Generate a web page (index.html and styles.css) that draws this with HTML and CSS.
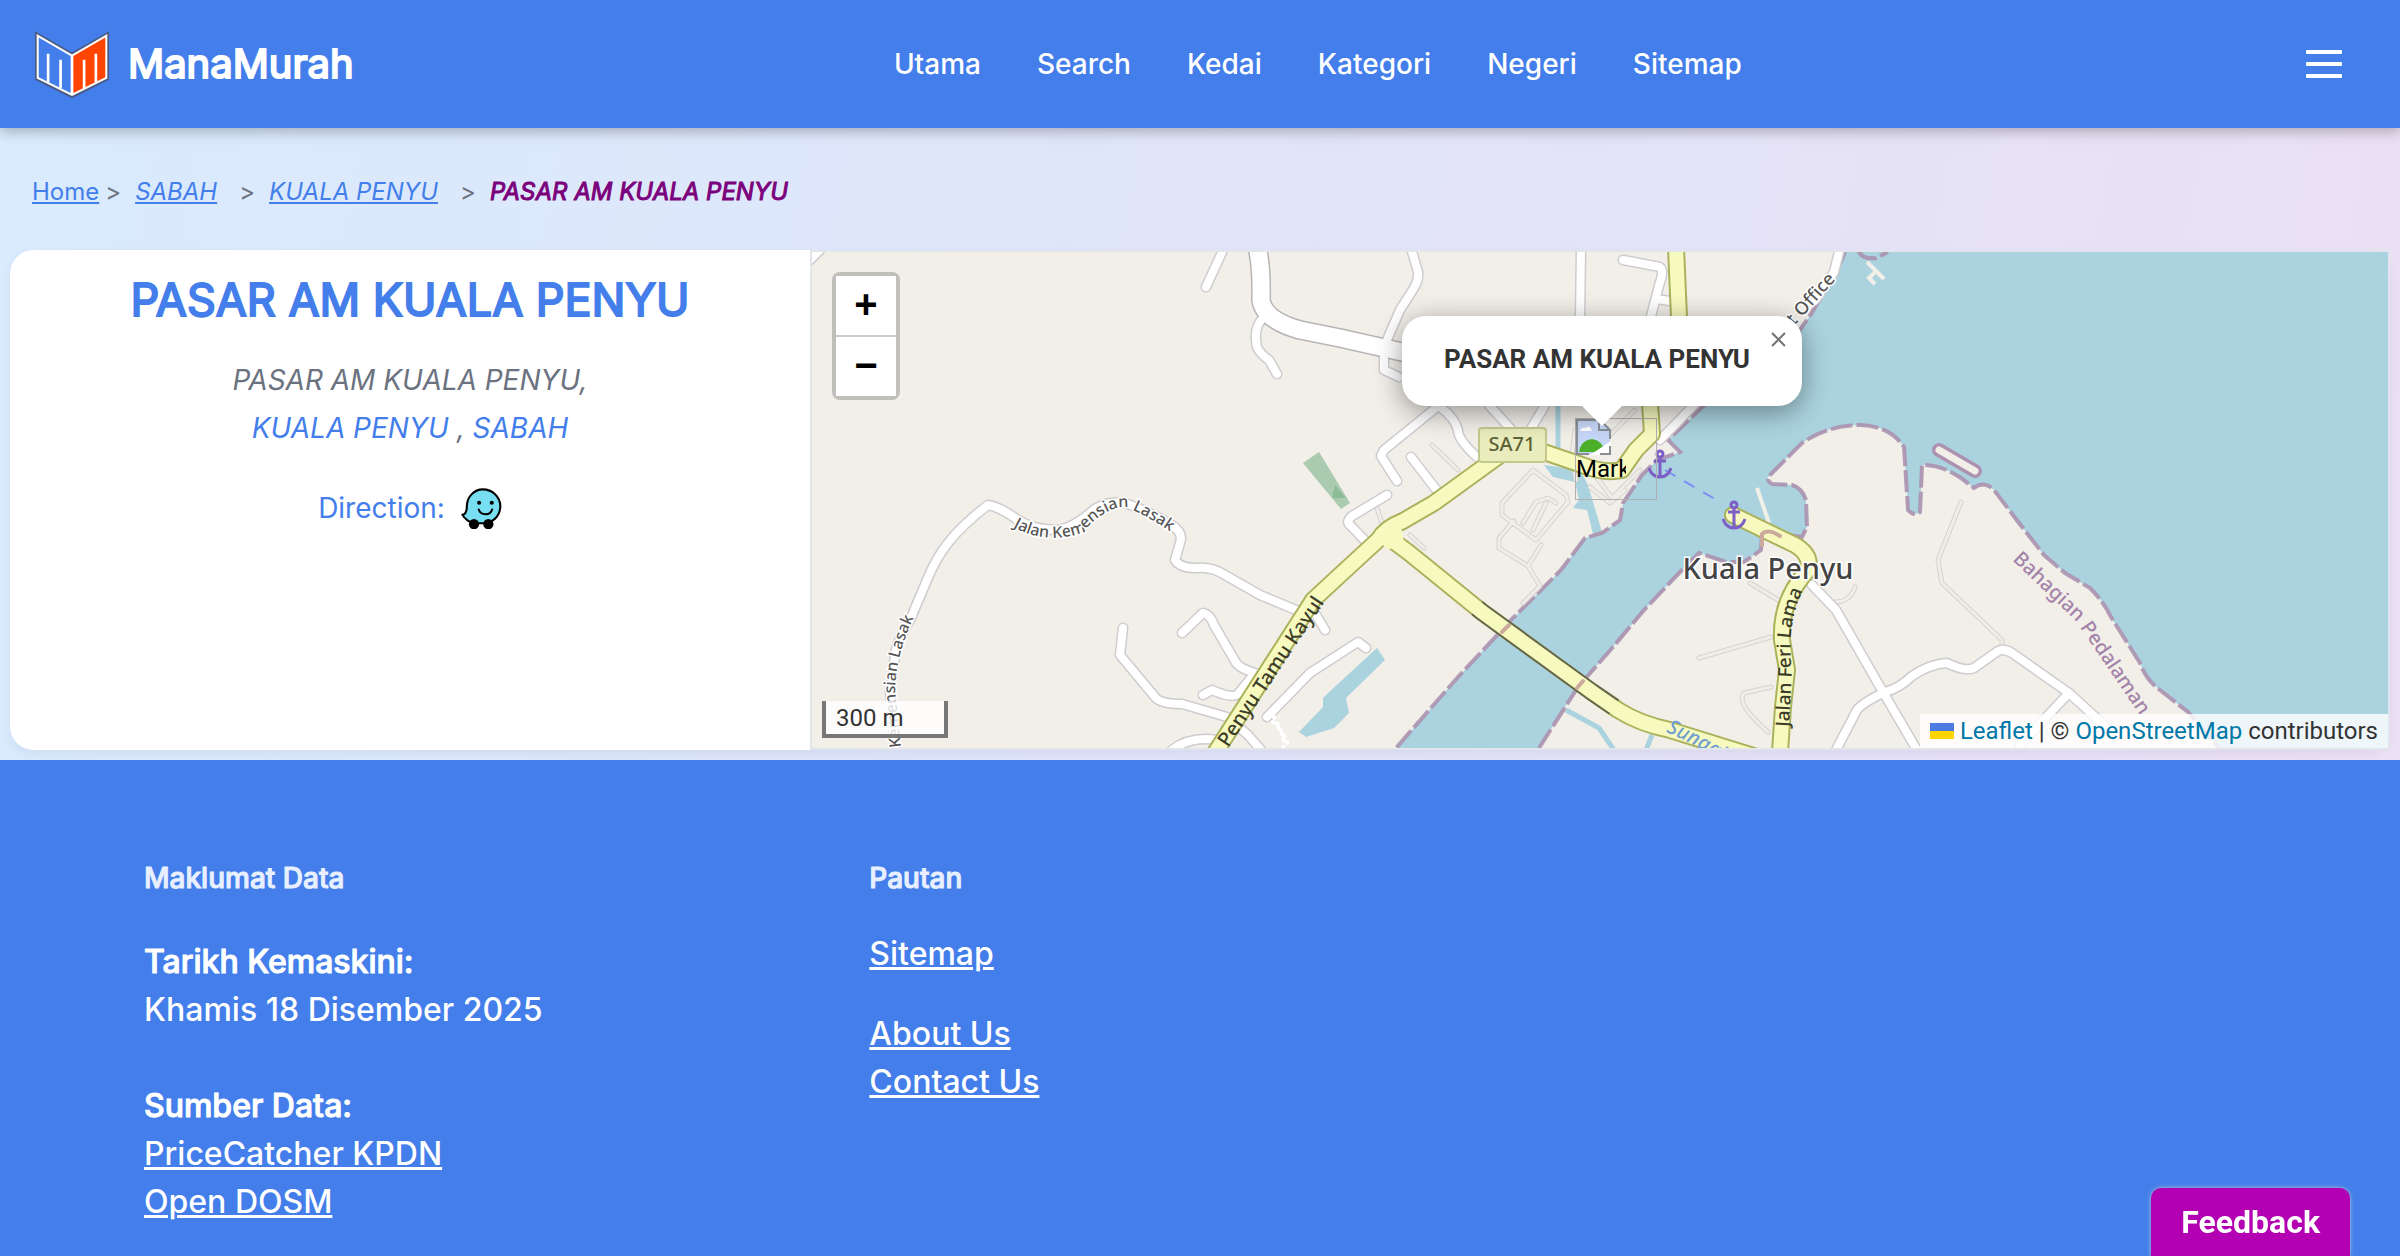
FILE: index.html
```html
<!DOCTYPE html>
<html lang="ms">
<head>
<meta charset="utf-8">
<meta name="viewport" content="width=device-width, initial-scale=1">
<title>PASAR AM KUALA PENYU - ManaMurah</title>
<link rel="stylesheet" href="styles.css">
</head>
<body>
<header class="site-header">
  <a class="brand" href="#">
    <svg class="brand-logo" viewBox="0 0 226 204" aria-hidden="true">
      <path d="M3 3 113 66 223 3V147L113 202 3 147Z" fill="#4a5a80"/>
      <path d="M8 11 113 72 218 11V144L113 196 8 144Z" fill="#fff"/>
      <path d="M14 22 109 77V187L14 140Z" fill="#437eeb"/>
      <path d="M117 77 212 22V140L117 187Z" fill="#ff4500"/>
      <path d="M42 154V70M79 172V88M149 172V88M184 154V70" stroke="#fff" stroke-width="8" fill="none"/>
    </svg>
    <span class="brand-name">ManaMurah</span>
  </a>
  <nav class="main-nav" aria-label="Utama">
    <a href="#">Utama</a>
    <a href="#">Search</a>
    <a href="#">Kedai</a>
    <a href="#">Kategori</a>
    <a href="#">Negeri</a>
    <a href="#">Sitemap</a>
  </nav>
  <button class="menu-button" type="button" aria-label="Menu"><span></span><span></span><span></span></button>
</header>

<main>
  <nav class="breadcrumb" aria-label="Breadcrumb">
    <a href="#">Home</a><span class="sep sep-first">&gt;</span>
    <a class="place" href="#">SABAH</a><span class="sep">&gt;</span>
    <a class="place" href="#">KUALA PENYU</a><span class="sep">&gt;</span>
    <span class="current">PASAR AM KUALA PENYU</span>
  </nav>

  <section class="store">
    <div class="store-info">
      <h1>PASAR AM KUALA PENYU</h1>
      <address>PASAR AM KUALA PENYU,<br><a href="#">KUALA PENYU</a> , <a href="#">SABAH</a></address>
      <a class="direction" href="#">Direction:
        <svg class="waze" viewBox="0 0 120 120" aria-hidden="true">
          <path d="M64 4C91 4 115 25 115 53C115 84 91 103 64 103H42C28 103 10 91 4 78C14 77 17 70 17 55C17 26 38 4 64 4Z" fill="#78dff2" stroke="#000" stroke-width="6" stroke-linejoin="round"/>
          <circle cx="38" cy="106" r="15"/><circle cx="80" cy="106" r="15"/>
          <circle cx="53" cy="43" r="6"/><circle cx="90" cy="43" r="6"/>
          <path d="M52 63C57 81 86 82 91 63" fill="none" stroke="#000" stroke-width="6" stroke-linecap="round"/>
        </svg>
      </a>
    </div>

    <div class="map">
      <svg class="map-canvas" viewBox="812 252 1576 496" preserveAspectRatio="xMidYMid slice" role="img" aria-label="Peta Kuala Penyu">
        <defs>
          <path id="coast-north" d="M1845 252 1836 273 1809 317 1795 337 1702 407 1668 440 1680 452 1657 460 1642 475 1623 503 1620 520 1602 533 1585 538 1561 570 1513 618 1458 677 1396 748"/>
          <path id="coast-south" d="M1539 748 1578 687 1613 647 1644 610 1682 570 1699 553 1726 562H1744L1761 550 1762 533 1770 532 1802 537 1807 527 1806 500Q1802 488 1792 485L1772 484Q1765 480 1770 475L1778 467 1802 443Q1828 425 1861 425 1890 426 1904 447L1908 510Q1914 517 1920 512L1922 465Q1940 464 1961 478L1974 488Q1984 480 1994 490L2019 523 2044 555 2065 573 2090 588Q2104 602 2111 617L2140 663Q2146 680 2160 690L2188 712 2219 748"/>
          <g id="lanes">
            <path d="M810 260 820 250M1224 248 1206 287M1263 318Q1253 328 1257 347 1260 354 1269 360L1277 374"/>
            <path d="M895 752 890 690 896 650Q900 635 910 620L927 580Q936 558 948 543 962 525 988 505 1000 507 1018 520 1034 530 1058 530 1072 528 1090 513 1103 500 1125 503 1150 512 1170 524 1184 532 1180 543L1175 560Q1180 568 1195 568 1212 566 1225 575L1260 595 1296 610 1316 615 1325 630"/>
            <path d="M1123 628 1120 655 1155 697Q1160 704 1182 704L1227 717 1248 735 1261 750M1182 633 1203 613Q1210 614 1214 625L1235 661Q1238 668 1255 673L1238 694Q1232 699 1212 690L1203 695M1172 750Q1190 736 1217 740M1267 717 1310 673 1358 642 1366 648"/>
            <path d="M1411 248 1418 272Q1419 280 1414 288L1400 310 1384 347 1384 370 1399 377M1581 248 1580 320M1623 260 1655 266Q1666 266 1660 282L1650 320M1656 299 1670 301M1840 248 1834 272 1815 300"/>
            <path d="M1437 407 1384 450 1381 456 1397 481M1440 407Q1455 418 1458 430 1458 440 1477 457M1411 457 1442 497M1489 405 1518 437M1544 407 1526 437M1387 495 1352 516Q1345 522 1351 526L1372 548M1696 403 1660 440"/>
            <path d="M1812 585 1836 610 1883 692 1917 750M1836 750 1857 710Q1862 703 1885 692 1900 688 1912 676 1930 664 1947 663 1965 672 1974 668L1998 651Q2004 648 2012 653L2069 693 2115 735M2069 693 2020 745"/>
          </g>
          <g id="paths">
            <path d="M1533 470 1502 503V515L1536 540 1568 502 1566 495ZM1514 521 1499 538V548L1528 566 1541 545M1528 566 1540 586 1523 603M1523 523 1536 502 1548 498 1556 503M1533 530 1546 503M1575 430 1572 455 1576 480M1595 475 1612 498 1640 470M1590 487 1610 503 1625 490M1605 440 1635 410M1432 445 1458 470M1376 505 1384 530M1410 535 1424 548"/>
            <path d="M1961 502 1938 560 1942 583 2002 640V650M1699 658 1771 637M1771 687 1744 693Q1735 703 1768 732M1750 583 1778 600M1855 587Q1850 602 1835 602"/>
          </g>
          <path id="main-kayul" d="M1215 753 1313 600 1340 575 1378 540Q1385 528 1403 521L1434 503 1492 461 1512 447 1544 452 1582 465Q1604 474 1622 470L1636 450 1652 434 1650 403Q1676 370 1679 317L1676 248"/>
          <path id="main-bridge" d="M1389 538 1408 552 1482 612 1592 692 1618 710Q1640 724 1670 730L1760 758"/>
          <path id="main-feri" d="M1733 515 1795 545Q1812 555 1808 570 1780 600 1782 640L1787 670 1783 707 1780 752"/>
          <path id="t-kemensian" d="M1013 527Q1045 545 1082 533 1105 507 1125 507 1150 516 1182 540"/>
          <path id="t-kemensian2" d="M901 747 895 690Q896 650 920 605"/>
          <path id="t-kayul" d="M1228 748 1330 594"/>
          <path id="t-feri" d="M1789 727 1792 670Q1785 620 1809 578"/>
          <path id="t-bahagian" d="M2012 560 2075 620 2150 730"/>
          <path id="t-sungai" d="M1666 732Q1690 742 1730 765"/>
          <g id="anchor" fill="none" stroke="#7d5fc6" stroke-width="3">
            <circle cy="-10" r="3"/><path d="M0-7V13M-6-3H6M-11 4Q-8 13 0 13 8 13 11 4"/>
          </g>
        </defs>

        <path fill="#f2efe9" d="M0 0H3200V1000H0Z"/>
        <path fill="#aad3df" d="M1845 252 1836 273 1809 317 1795 337 1702 407 1668 440 1680 452 1657 460 1642 475 1623 503 1620 520 1602 533 1585 538 1561 570 1513 618 1458 677 1396 748H1539L1578 687 1613 647 1644 610 1682 570 1699 553 1726 562H1744L1761 550 1762 533 1770 532 1802 537 1807 527 1806 500Q1802 488 1792 485L1772 484Q1765 480 1770 475L1778 467 1802 443Q1828 425 1861 425 1890 426 1904 447L1908 510Q1914 517 1920 512L1922 465Q1940 464 1961 478L1974 488Q1984 480 1994 490L2019 523 2044 555 2065 573 2090 588Q2104 602 2111 617L2140 663Q2146 680 2160 690L2188 712 2219 748H2400V252Z"/>
        <path fill="#aad3df" d="M1377 648 1385 660 1346 698 1349 713 1334 728 1306 737 1299 732 1323 707V698L1340 682ZM1544 465 1580 470 1588 485 1602 532 1593 534 1587 510 1573 508 1579 500 1575 482 1553 477Z"/>
        <path fill="none" stroke="#aad3df" stroke-width="5" d="M1558 400V462M1566 710 1599 728 1614 750M1652 735 1646 750"/>
        <path fill="#aacbaf" d="M1303 463 1319 452 1350 503 1341 509Z"/>
        <path fill="#8cbc98" d="M1335 485 1346 498H1332Z"/>

        <g fill="none" stroke="#ac92b0" stroke-width="4" stroke-dasharray="22 4" opacity=".9">
          <use href="#coast-north"/><use href="#coast-south"/>
          <path d="M1858 250Q1862 260 1876 258L1888 252"/>
        </g>
        <path fill="none" stroke="#f2efe9" stroke-width="4" d="M1867 262 1884 279M1876 271 1869 278 1875 284M1757 488 1769 523"/>
        <path fill="none" stroke="#ac92b0" stroke-width="14" stroke-linecap="round" d="M1939 450 1975 471"/>
        <path fill="none" stroke="#f2efe9" stroke-width="7" stroke-linecap="round" d="M1939 450 1975 471"/>

        <g fill="none" stroke-linecap="round" stroke-linejoin="round">
          <use href="#paths" stroke="#d6d2cf" stroke-width="5"/>
          <use href="#paths" stroke="#f0ede9" stroke-width="3"/>
          <use href="#lanes" stroke="#cfccd0" stroke-width="11"/>
          <path stroke="#b9b5b5" stroke-width="20" d="M1255 240Q1262 260 1261 300 1264 320 1300 330L1340 338 1402 352"/>
          <use href="#lanes" stroke="#fff" stroke-width="8"/>
          <path stroke="#fff" stroke-width="17" d="M1255 240Q1262 260 1261 300 1264 320 1300 330L1340 338 1402 352"/>
          <path stroke="#fff" stroke-width="4" stroke-dasharray="1 6" d="M1267 718Q1287 730 1283 750M1274 717 1290 748"/>
          <g stroke="#abb25c" stroke-width="18">
            <use href="#main-kayul"/><use href="#main-bridge"/><use href="#main-feri"/>
          </g>
          <path stroke="#66684a" stroke-width="18" stroke-linecap="butt" d="M1477 608 1482 612 1592 692 1614 707"/>
          <g stroke="#f7fabf" stroke-width="14">
            <use href="#main-kayul"/><use href="#main-bridge"/><use href="#main-feri"/>
          </g>
          <path stroke="none" fill="#f7fabf" d="M1374 536 1400 522 1404 542 1388 550Z"/>
          <path stroke="#cba99b" stroke-width="4" d="M1502 632 1509 625M1577 688 1583 681M1762 545V534Q1768 528 1780 536"/>
        </g>

        <path fill="none" stroke="#7f8ff0" stroke-width="2" stroke-dasharray="12 10" d="M1665 470 1720 502"/>
        <use href="#anchor" x="1660" y="464"/>
        <use href="#anchor" x="1734" y="515"/>

        <rect x="1479" y="428" width="67" height="34" rx="3" fill="#e9ecbc" stroke="#c3c98c" stroke-width="2"/>
        <g class="map-label">
          <text x="1512" y="451" font-size="20" fill="#5d6237" text-anchor="middle">SA71</text>
          <text x="1768" y="579" font-size="29" fill="#444" text-anchor="middle" class="halo">Kuala Penyu</text>
          <g font-size="16" fill="#555" class="halo">
            <text><textPath href="#t-kemensian">Jalan Kemensian Lasak</textPath></text>
            <text><textPath href="#t-kemensian2">Kemensian Lasak</textPath></text>
          </g>
          <text font-size="20" fill="#3c3c28"><textPath href="#t-kayul">Penyu Tamu Kayul</textPath></text>
          <text font-size="19" fill="#3c3c28"><textPath href="#t-feri">Jalan Feri Lama</textPath></text>
          <text font-size="20" fill="#a483aa"><textPath href="#t-bahagian">Bahagian Pedalaman</textPath></text>
          <text font-size="20" fill="#6f9fd0" font-style="italic"><textPath href="#t-sungai">Sungai</textPath></text>
          <text font-size="18" fill="#555" class="halo" transform="translate(1794 326) rotate(-48)">t Office</text>
        </g>
      </svg>

      <div class="zoom-control">
        <button type="button" aria-label="Zoom in">+</button>
        <button type="button" aria-label="Zoom out">&minus;</button>
      </div>
      <div class="scale">300 m</div>

      <div class="marker">
        <svg class="marker-image" viewBox="0 0 36 36" aria-hidden="true">
          <path d="M1 1H24L34 11V35H1Z" fill="#c5d6f6"/>
          <path d="M4 12Q6 7 10 9 13 5 16 12Z" fill="#fff"/>
          <path d="M3 33Q5 21 16 20 26 21 29 33Z" fill="#4caf2a"/>
          <path d="M14 36 35 22V36Z" fill="#fff"/>
          <path d="M1 36V1H24L34 11V20M23 1V11H34M1 35H13M34 27V35H24" fill="none" stroke="#8a8f96" stroke-width="2"/>
        </svg>
        <span class="marker-alt">Marker</span>
      </div>
      <div class="popup" role="dialog" aria-label="PASAR AM KUALA PENYU">
        <strong>PASAR AM KUALA PENYU</strong>
        <button class="popup-close" type="button" aria-label="Close">
          <svg viewBox="0 0 14 14" aria-hidden="true"><path d="M1 1 13 13M13 1 1 13" stroke="#757575" stroke-width="2"/></svg>
        </button>
      </div>

      <div class="attribution">
        <svg viewBox="0 0 24 16" aria-hidden="true"><path fill="#4c7be1" d="M0 0h24v8H0z"/><path fill="#ffd500" d="M0 8h24v8H0z"/></svg>
        <span><a href="#">Leaflet</a> | © <a href="#">OpenStreetMap</a> contributors</span>
      </div>
    </div>
  </section>
</main>

<footer class="site-footer">
  <section>
    <h2>Maklumat Data</h2>
    <div class="facts">
      <p><strong>Tarikh Kemaskini:</strong><br>Khamis 18 Disember 2025</p>
      <p><strong>Sumber Data:</strong><br><a href="#">PriceCatcher KPDN</a><br><a href="#">Open DOSM</a></p>
    </div>
  </section>
  <section>
    <h2>Pautan</h2>
    <div class="links">
      <p><a href="#">Sitemap</a></p>
      <p><a href="#">About Us</a><br><a href="#">Contact Us</a></p>
    </div>
  </section>
</footer>

<button class="feedback" type="button">Feedback</button>
</body>
</html>
```
FILE: styles.css
```css
:root {
  --blue: #437eeb;
  --line: #e2e6ec;
}

* {
  box-sizing: border-box;
}

body {
  margin: 0;
  font-family: Inter, "Liberation Sans", sans-serif;
  font-size: 32px;
  line-height: 48px;
  background: var(--blue);
}

h1,
h2,
p {
  margin: 0;
}

button {
  border: 0;
  padding: 0;
  font: inherit;
  cursor: pointer;
}

h1,
h2,
strong,
.brand-name,
.current {
  font-weight: 450;
  -webkit-text-stroke: 1px currentColor;
}

h1,
.brand-name {
  font-weight: 400;
  -webkit-text-stroke-width: 2px;
}

/* Header */
.site-header {
  position: relative;
  display: flex;
  align-items: center;
  justify-content: space-between;
  height: 128px;
  padding: 0 34px;
  background: var(--blue);
  box-shadow: 0 4px 12px rgba(0, 0, 0, .25);
}

.brand {
  display: flex;
  align-items: center;
  gap: 18px;
  color: #fff;
  text-decoration: none;
}

.brand-logo {
  width: 76px;
  height: 69px;
}

.brand-name {
  font-size: 40px;
}

.main-nav {
  display: flex;
  flex-wrap: wrap;
  gap: 0 56px;
}

.main-nav a {
  color: #fff;
  font-size: 28px;
  font-weight: 500;
  text-decoration: none;
}

.menu-button {
  display: flex;
  flex-direction: column;
  gap: 8px;
  padding: 24px;
  background: none;
}

.menu-button span {
  width: 36px;
  height: 4px;
  border-radius: 1px;
  background: #fff;
}

/* Page body */
main {
  padding: 40px 10px 10px;
  background: linear-gradient(100deg, #d9ebfd, #dfe6fa 40%, #ebe0f4);
}

.breadcrumb {
  display: flex;
  flex-wrap: wrap;
  padding: 0 22px;
  margin-bottom: 34px;
  font-size: 24px;
}

.breadcrumb a {
  color: #437eeb;
}

.place,
.current {
  font-style: italic;
}

.sep {
  padding: 0 14px 0 22px;
  color: #6b7280;
}

.sep-first {
  padding-left: 6px;
}

.current {
  color: #7b007b;
}

/* Store card */
.store {
  display: grid;
  grid-template-columns: 40fr 79fr;
  border-radius: 24px;
  box-shadow: 0 4px 8px rgba(80, 80, 140, .08);
}

.store-info {
  display: flex;
  flex-direction: column;
  align-items: center;
  gap: 32px;
  min-height: 500px;
  padding: 26px 24px;
  border-radius: 24px 0 0 24px;
  background: #fff;
  font-size: 28px;
  text-align: center;
}

h1 {
  color: #437eeb;
  font-size: 45px;
}

address {
  color: #6b7280;
}

.store-info a {
  color: #437eeb;
  text-decoration: none;
}

.direction {
  display: flex;
  align-items: center;
  gap: 16px;
}

.waze {
  width: 41px;
  height: 41px;
}

/* Map */
.map {
  position: relative;
  overflow: hidden;
  border: 2px solid var(--line);
  color: #333;
  font-family: Roboto, "Liberation Sans", sans-serif;
  font-size: 24px;
  line-height: 34px;
}

.map-canvas {
  position: absolute;
  inset: 0;
  width: 100%;
  height: 100%;
}

.map-label {
  font-family: "Noto Sans", sans-serif;
  font-weight: 500;
}

.halo {
  paint-order: stroke;
  stroke: #fff;
  stroke-width: 3px;
}

.zoom-control {
  position: absolute;
  top: 20px;
  left: 20px;
  display: flex;
  flex-direction: column;
  gap: 2px;
  border: 4px solid rgba(0, 0, 0, .2);
  border-radius: 8px;
  background: #ccc;
  background-clip: padding-box;
}

.zoom-control button {
  width: 60px;
  height: 59px;
  padding-bottom: 4px;
  background: #fff;
  color: #000;
  font-family: "Liberation Sans", sans-serif;
  font-size: 40px;
  font-weight: 700;
}

.scale {
  position: absolute;
  left: 10px;
  bottom: 10px;
  width: 126px;
  height: 37px;
  padding-left: 10px;
  border: 4px solid #777;
  border-top: 0;
  background: rgba(255, 255, 255, .8);
}

.marker {
  position: absolute;
  top: 166px;
  left: calc(50% - 25px);
  width: 82px;
  height: 82px;
  border: 1px solid #b0b0b0;
  color: #000;
}

.marker-image {
  display: block;
  width: 36px;
  height: 36px;
}

.marker-alt {
  display: block;
  width: 50px;
  height: 30px;
  overflow: hidden;
  line-height: 28px;
}

.popup {
  position: absolute;
  top: 64px;
  left: calc(50% - 198px);
  width: 400px;
  padding: 26px 42px 30px;
  border-radius: 24px;
  background: #fff;
  box-shadow: 0 6px 28px rgba(0, 0, 0, .4);
  font-size: 26px;
  white-space: nowrap;
}

.popup::after {
  content: "";
  position: absolute;
  top: 100%;
  left: 180px;
  border: 20px solid transparent;
  border-top-color: #fff;
  border-bottom: 0;
}

.popup strong {
  font-weight: 700;
  -webkit-text-stroke: 0;
}

.popup-close {
  position: absolute;
  top: 16px;
  right: 16px;
  display: flex;
  background: none;
}

.popup-close svg {
  width: 15px;
  height: 15px;
}

.attribution {
  position: absolute;
  right: 0;
  bottom: 0;
  display: flex;
  align-items: center;
  gap: 6px;
  padding: 0 10px;
  background: rgba(255, 255, 255, .8);
}

.attribution svg {
  width: 24px;
  height: 16px;
}

.attribution a {
  color: #0078a8;
  text-decoration: none;
}

/* Footer */
.site-footer {
  display: grid;
  grid-template-columns: repeat(3, 1fr);
  gap: 64px;
  padding: 94px 144px 30px;
  background: var(--blue);
  color: #fff;
  font-weight: 450;
}

.site-footer a {
  color: #fff;
}

h2 {
  color: #e8f0ff;
  font-size: 28px;
}

.facts {
  display: grid;
  gap: 48px;
  margin-top: 36px;
}

.links {
  display: grid;
  gap: 32px;
  margin-top: 28px;
}

.feedback {
  position: fixed;
  right: 50px;
  bottom: 0;
  padding: 10px 30px;
  border-radius: 10px 10px 0 0;
  background: #b300b3;
  box-shadow: 0 0 4px rgba(200, 200, 200, .9);
  color: #fff;
  font-family: Roboto, "Liberation Sans", sans-serif;
  font-weight: 700;
}
```
